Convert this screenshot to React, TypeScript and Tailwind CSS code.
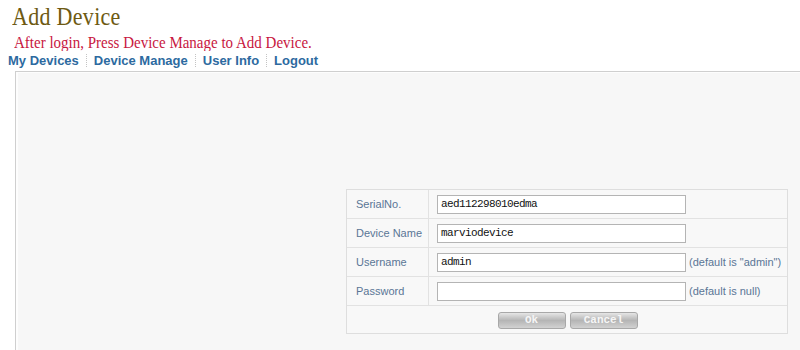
import React from 'react';

const navItems = ['My Devices', 'Device Manage', 'User Info', 'Logout'];

interface Field {
  label: string;
  value: string;
  hint?: string;
}

const fields: Field[] = [
  { label: 'SerialNo.', value: 'aed112298010edma' },
  { label: 'Device Name', value: 'marviodevice' },
  { label: 'Username', value: 'admin', hint: '(default is "admin")' },
  { label: 'Password', value: '', hint: '(default is null)' },
];

const App: React.FC = () => {
  return (
    <div className="w-[800px] h-[350px] overflow-hidden bg-white">
      {/* Heading */}
      <div className="pl-[12px] pt-[5px]">
        <h1 className="origin-bottom-left scale-y-[1.15] font-['Liberation_Serif',serif] text-[22px] leading-[28px] text-[#6e5a12] tracking-[0.3px]">
          Add Device
        </h1>
        <p className="pl-[2px] pt-[1px] origin-bottom-left scale-y-[1.08] font-['Liberation_Serif',serif] text-[15px] leading-[18px] text-[#c8173f]">
          After login, Press Device Manage to Add Device.
        </p>
      </div>

      {/* Nav */}
      <div className="flex items-center pl-[8px] h-[17px] font-['Liberation_Sans',Arial,sans-serif] text-[13px] font-bold text-[#2d6aa0] leading-[17px]">
        {navItems.map((item, i) => (
          <React.Fragment key={item}>
            {i > 0 && <span className="mx-[7px] h-[13px] border-l border-dotted border-[#c4c4c4]" />}
            <span>{item}</span>
          </React.Fragment>
        ))}
      </div>

      {/* Panel */}
      <div className="ml-[15px] mt-[2px] h-[300px] border-l border-t border-[#cfcfcf] bg-[#f7f7f7]">
        <div className="h-full border-l-[2px] border-t border-white/80 pt-[116px] flex justify-end pr-[12px]">
          <div className="w-[442px] h-[145px] border border-[#dedede] bg-[#f8f8f8] font-['Liberation_Sans',Arial,sans-serif] text-[11px] text-[#5a7696]">
            {fields.map((f) => (
              <div key={f.label} className="flex h-[29px] border-b border-[#e2e2e2]">
                <div className="w-[82px] shrink-0 border-r border-[#e2e2e2] pl-[9px] flex items-center">
                  {f.label}
                </div>
                <div className="flex items-center pl-[8px]">
                  <div className="w-[249px] h-[19px] shrink-0 border border-[#b4b4b4] bg-white pl-[3px] flex items-center font-['Liberation_Mono',monospace] text-[11px] tracking-[-0.6px] text-[#111]">
                    {f.value}
                  </div>
                  {f.hint && <span className="ml-[3px] whitespace-nowrap">{f.hint}</span>}
                </div>
              </div>
            ))}
            <div className="flex justify-center items-center gap-[4px] h-[28px] pl-[1px]">
              {['Ok', 'Cancel'].map((b) => (
                <button
                  key={b}
                  className="w-[68px] h-[17px] rounded-[3px] border border-[#a8a8a8] bg-gradient-to-b from-[#e6e6e6] via-[#b5b5b5] to-[#d2d2d2] font-['Liberation_Mono',monospace] text-[11px] font-bold text-[#f6f6f6] leading-[15px]"
                >
                  {b}
                </button>
              ))}
            </div>
          </div>
        </div>
      </div>
    </div>
  );
};

export default App;
